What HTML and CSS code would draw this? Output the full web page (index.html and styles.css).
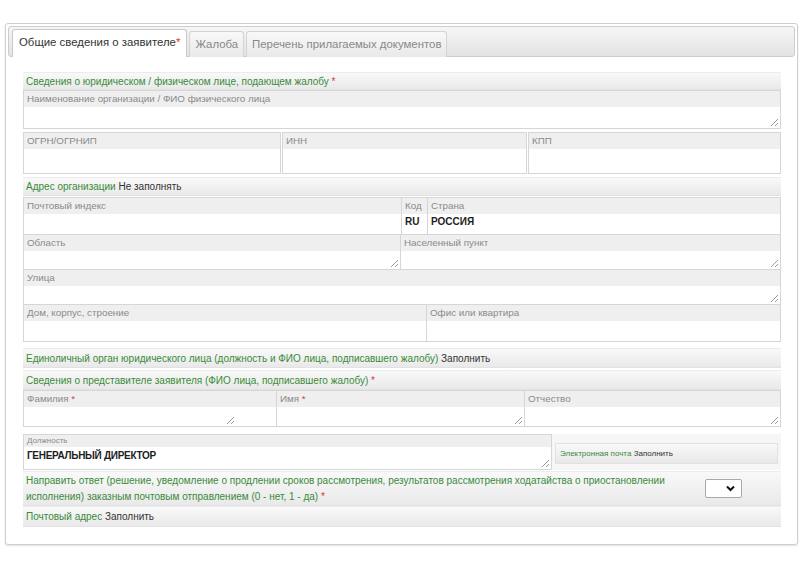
FILE: index.html
```html
<!DOCTYPE html>
<html lang="ru">
<head>
<meta charset="utf-8">
<title>Общие сведения о заявителе</title>
<link rel="stylesheet" href="styles.css">
</head>
<body>
<div class="panel">
  <div class="tabs">
    <div class="tab active">Общие сведения о заявителе<span class="req">*</span></div>
    <div class="tab">Жалоба</div>
    <div class="tab">Перечень прилагаемых документов</div>
  </div>
  <div class="content">
    <div class="hdr r-hdr1">Сведения о юридическом / физическом лице, подающем жалобу <span class="req">*</span></div>

    <div class="row r-name">
      <div class="field"><div class="lbl">Наименование организации / ФИО физического лица</div><div class="inp"></div><span class="grip"></span></div>
    </div>

    <div class="row r-ogrn">
      <div class="field"><div class="lbl">ОГРН/ОГРНИП</div><div class="inp"></div></div>
      <div class="field"><div class="lbl">ИНН</div><div class="inp"></div></div>
      <div class="field"><div class="lbl">КПП</div><div class="inp"></div></div>
    </div>

    <div class="hdr r-addr">Адрес организации <span class="act">Не заполнять</span></div>

    <div class="row r-postal">
      <div class="field"><div class="lbl">Почтовый индекс</div><div class="inp"></div></div>
      <div class="field"><div class="lbl">Код</div><div class="inp val">RU</div></div>
      <div class="field"><div class="lbl">Страна</div><div class="inp val">РОССИЯ</div></div>
    </div>

    <div class="row r-region">
      <div class="field"><div class="lbl">Область</div><div class="inp"></div><span class="grip"></span></div>
      <div class="field"><div class="lbl">Населенный пункт</div><div class="inp"></div><span class="grip"></span></div>
    </div>

    <div class="row r-street">
      <div class="field"><div class="lbl">Улица</div><div class="inp"></div><span class="grip"></span></div>
    </div>

    <div class="row r-house">
      <div class="field"><div class="lbl">Дом, корпус, строение</div><div class="inp"></div></div>
      <div class="field"><div class="lbl">Офис или квартира</div><div class="inp"></div></div>
    </div>

    <div class="hdr r-sole">Единоличный орган юридического лица (должность и ФИО лица, подписавшего жалобу) <span class="act">Заполнить</span></div>

    <div class="hdr r-repr">Сведения о представителе заявителя (ФИО лица, подписавшего жалобу) <span class="req">*</span></div>

    <div class="row r-fio">
      <div class="field"><div class="lbl">Фамилия <span class="req">*</span></div><div class="inp"></div><span class="grip g-mid"></span></div>
      <div class="field"><div class="lbl">Имя <span class="req">*</span></div><div class="inp"></div><span class="grip"></span></div>
      <div class="field"><div class="lbl">Отчество</div><div class="inp"></div><span class="grip"></span></div>
    </div>

    <div class="row r-pos">
      <div class="field pos"><div class="lbl small">Должность</div><div class="inp val">ГЕНЕРАЛЬНЫЙ ДИРЕКТОР</div><span class="grip"></span></div>
      <div class="emailwrap"><div class="email">Электронная почта <span class="act">Заполнить</span></div></div>
    </div>

    <div class="hdr r-send">
      <div class="send-text"><div class="line">Направить ответ (решение, уведомление о продлении сроков рассмотрения, результатов рассмотрения ходатайства о приостановлении</div><div class="line">исполнения) заказным почтовым отправлением (0 - нет, 1 - да) <span class="req">*</span></div></div>
      <div class="select"><svg width="9" height="7" viewBox="0 0 9 7"><path d="M1 1.5 L4.5 5 L8 1.5" fill="none" stroke="#111" stroke-width="2"/></svg></div>
    </div>

    <div class="hdr r-post">Почтовый адрес <span class="act">Заполнить</span></div>
  </div>
</div>
</body>
</html>
```

FILE: styles.css
```css
* { box-sizing: border-box; }
html, body { margin: 0; padding: 0; background: #fff; }
body {
  font-family: "Liberation Sans", Arial, sans-serif;
  font-size: 10px;
  color: #333;
  width: 812px;
  height: 582px;
  overflow: hidden;
}

.panel {
  margin: 23px 0 0 5px;
  width: 793px;
  height: 522px;
  border: 1px solid #cfcfcf;
  border-radius: 3px;
  padding: 2px;
  box-shadow: 0 1px 2px rgba(0,0,0,0.12);
  background: #fff;
}

.tabs {
  height: 31px;
  border: 1px solid #cdcdcd;
  border-radius: 3px;
  background: linear-gradient(#f6f6f6, #e3e3e3);
  display: flex;
  align-items: flex-end;
  padding: 3px 0 0 3px;
  gap: 2px;
}
.tab {
  height: 26px;
  margin-bottom: -1px;
  padding: 0 5px;
  font-size: 11.4px;
  line-height: 25px;
  color: #888;
  border: 1px solid #d3d3d3;
  border-bottom: none;
  border-radius: 3px 3px 0 0;
  background: linear-gradient(#f8f8f8, #e9e9e9);
  white-space: nowrap;
}
.tab.active {
  height: 28px;
  color: #333;
  background: #fff;
  border-color: #c9c9c9;
  padding: 0 6px;
}
.req { color: #d23a3a; }
.act { color: #333; }

.content {
  margin: 15px 14px 0 15px;
  display: flex;
  flex-direction: column;
}

.hdr {
  height: 18px;
  line-height: 17px;
  padding-left: 3px;
  color: #3a8a3a;
  font-size: 10px;
  background: linear-gradient(#f9f9f9, #e9e9e9);
  border-top: 1px solid #ececec;
  border-bottom: 1px solid #e2e2e2;
  white-space: nowrap;
}

.row { display: grid; }
.field {
  position: relative;
  border: 1px solid #d6d6d6;
  background: #fff;
  display: flex;
  flex-direction: column;
}
.lbl {
  height: 16px;
  line-height: 15px;
  padding-left: 3px;
  color: #8a8a8a;
  background: #efefef;
  white-space: nowrap;
  overflow: hidden;
  font-size: 9.8px;
}
.lbl.small { font-size: 8px; height: 12px; line-height: 12px; }
.inp { flex: 1; background: #fff; }
.inp.val {
  font-weight: bold;
  font-size: 10px;
  color: #1e1e1e;
  padding-left: 3px;
  line-height: 16px;
}
.field.pos .inp.val { letter-spacing: -0.3px; line-height: 18px; }

.grip {
  position: absolute;
  right: 2px;
  bottom: 2px;
  width: 7px;
  height: 7px;
  background:
    linear-gradient(135deg, transparent 45%, #9a9a9a 45%, #9a9a9a 55%, transparent 55%) 0 0 / 7px 7px no-repeat,
    linear-gradient(135deg, transparent 72%, #9a9a9a 72%, #9a9a9a 84%, transparent 84%) 0 0 / 7px 7px no-repeat;
}
.grip.g-mid { right: 42px; }

.r-name { height: 39px; grid-template-columns: 1fr; }
.r-ogrn { height: 42px; margin-top: 3px; grid-template-columns: 258px 245px 1fr; gap: 1px; }
.r-addr { margin-top: 3px; height: 19px; line-height: 18px; }
.r-postal { height: 38px; margin-top: 1px; grid-template-columns: 379px 26px 1fr; }
.r-postal .field + .field { border-left: none; }
.r-region { height: 35px; grid-template-columns: 378px 1fr; }
.r-region .field + .field { border-left: none; }
.r-street { height: 35px; grid-template-columns: 1fr; }
.r-house { height: 37px; grid-template-columns: 404px 1fr; }
.r-house .field + .field { border-left: none; }
.r-region .field, .r-street .field, .r-house .field { border-top: none; }
.r-sole { margin-top: 6px; height: 20px; line-height: 19px; }
.r-repr { margin-top: 2px; height: 20px; line-height: 19px; }
.r-fio { height: 37px; grid-template-columns: 254px 248px 1fr; }
.r-fio .field + .field { border-left: none; }
.r-pos { height: 36px; margin-top: 7px; grid-template-columns: 529px 1fr; }
.emailwrap {
  background: #f6f6f6;
  padding: 9px 3px 6px 3px;
}
.email {
  height: 21px;
  line-height: 20px;
  padding-left: 4px;
  font-size: 8px;
  color: #3a8a3a;
  background: linear-gradient(#f9f9f9, #e8e8e8);
  border: 1px solid #e2e2e2;
}
.r-send {
  margin-top: 1px;
  height: 35px;
  display: flex;
  align-items: flex-start;
  white-space: nowrap;
  padding-top: 1px;
}
.send-text { width: 653px; }
.send-text .line { height: 16px; line-height: 16px; }
.select {
  margin: 6px 0 0 26px;
  width: 37px;
  height: 19px;
  background: #fff;
  border: 1px solid #a9a9a9;
  border-radius: 2px;
  display: flex;
  align-items: center;
  justify-content: flex-end;
  padding-right: 6px;
}
.r-post { height: 21px; line-height: 20px; }
```
